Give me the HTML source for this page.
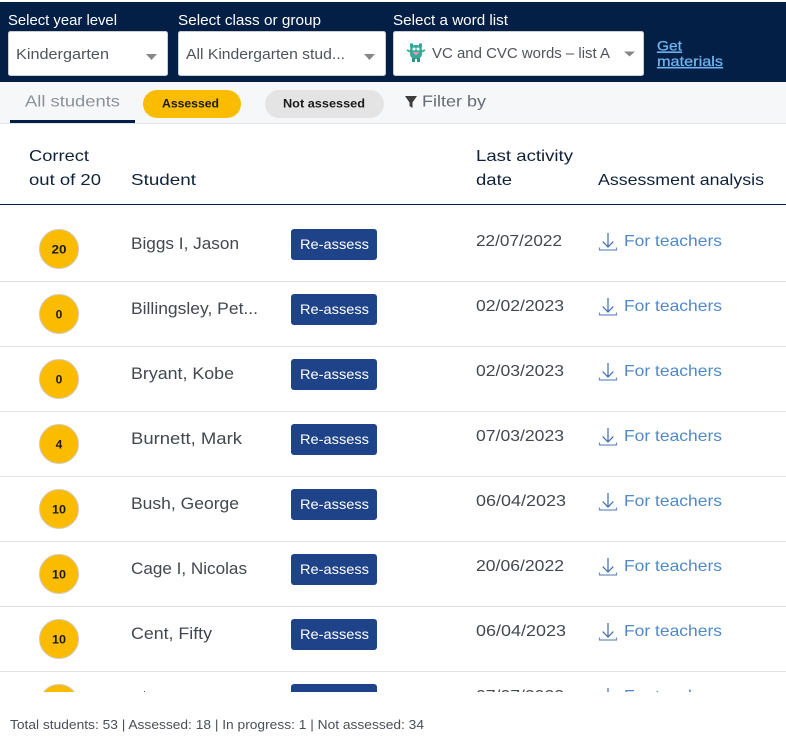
<!DOCTYPE html>
<html lang="en"><head><meta charset="utf-8"><title>Students</title>
<style>
html,body{margin:0;padding:0;background:#fff;width:786px;height:746px;overflow:hidden}
svg{display:block}
text{font-family:"Liberation Sans",sans-serif;white-space:pre}
.lab{font-size:14.5px;fill:#fff}
.sel{font-size:14.5px;fill:#4f545c}
.h{font-size:16px;fill:#0f2238}
.n{font-size:16.5px;fill:#43484f}
.d{font-size:16px;fill:#43484f}
.t{font-size:16px;fill:#5089c6}
.b{font-size:14px;fill:#fff}
.c{font-size:12px;font-weight:bold;fill:#1a1a1a}
.pill{font-size:12px;font-weight:bold;fill:#1a1a1a}
.g{font-size:14px;fill:#6fb5ee;stroke:#6fb5ee;stroke-width:.25px;text-decoration:underline}
</style></head><body>
<svg width="786" height="746" viewBox="0 0 786 746" xmlns="http://www.w3.org/2000/svg">
<defs>
<clipPath id="clip"><rect x="0" y="124" width="786" height="568"/></clipPath>
<g id="dl" fill="none" stroke="#3f6cae" stroke-width="1.2">
<path d="M9 0V13.5"/><path d="M3.7 8.6L9 14L14.300 8.600"/><path d="M.5 14.500V17H17.500V14.500" stroke="#6f8fc0"/>
</g>
</defs>
<rect width="786" height="746" fill="#fff"/>
<rect y="2" width="786" height="80" fill="#031f45"/>
<rect y="82" width="786" height="41" fill="#f5f7f9"/>
<rect y="123" width="786" height="1" fill="#e3e4e6"/>

<text class="lab" x="8" y="25" textLength="109" lengthAdjust="spacingAndGlyphs">Select year level</text>
<text class="lab" x="178" y="25" textLength="143" lengthAdjust="spacingAndGlyphs">Select class or group</text>
<text class="lab" x="393" y="25" textLength="115" lengthAdjust="spacingAndGlyphs">Select a word list</text>

<rect x="8.500" y="31.500" width="159" height="44" rx="2" fill="#fff" stroke="#c9ccd1"/>
<text class="sel" x="16" y="59" textLength="93" lengthAdjust="spacingAndGlyphs">Kindergarten</text>
<path d="M146 54H157L151.500 60Z" fill="#85878b"/>

<rect x="178.500" y="31.500" width="207" height="44" rx="2" fill="#fff" stroke="#c9ccd1"/>
<text class="sel" x="186" y="59" textLength="159" lengthAdjust="spacingAndGlyphs">All Kindergarten stud...</text>
<path d="M364 54H375L369.500 60Z" fill="#85878b"/>

<rect x="393.500" y="31.500" width="250" height="44" rx="2" fill="#fff" stroke="#c9ccd1"/>
<g>
<path d="M407 50L411 52M425 50L421 52" stroke="#2ea58f" stroke-width="1.800"/>
<rect x="410" y="45" width="12" height="14" rx="5" fill="#35ab9a"/>
<rect x="410" y="43.500" width="3" height="4" fill="#2fa897"/><rect x="419" y="43.500" width="3" height="4" fill="#2fa897"/>
<rect x="412" y="58" width="3" height="4" fill="#2b9484"/><rect x="417" y="58" width="3" height="4" fill="#2b9484"/>
<circle cx="414" cy="49" r="1.500" fill="#fff"/><circle cx="418" cy="49" r="1.500" fill="#fff"/>
<path d="M412.500 52H419.500L416 55.500Z" fill="#ea9ab2"/>
</g>
<text class="sel" x="432" y="58" textLength="178" lengthAdjust="spacingAndGlyphs">VC and CVC words – list A</text>
<path d="M624 51.500H635L629.500 56.500Z" fill="#85878b"/>

<text class="g" x="657" y="50.500" textLength="25" lengthAdjust="spacingAndGlyphs">Get</text>
<text class="g" x="657" y="66" textLength="66" lengthAdjust="spacingAndGlyphs">materials</text>

<text x="25" y="106.500" font-size="16" fill="#8d9199" textLength="95" lengthAdjust="spacingAndGlyphs">All students</text>
<rect x="10" y="120" width="125" height="3" fill="#031f45"/>
<rect x="143" y="90" width="98" height="28" rx="14" fill="#fbbc00"/>
<text class="pill" x="162" y="107.500" textLength="57" lengthAdjust="spacingAndGlyphs">Assessed</text>
<rect x="265" y="90" width="119" height="28" rx="14" fill="#e4e4e4"/>
<text class="pill" x="283" y="107.500" textLength="82" lengthAdjust="spacingAndGlyphs">Not assessed</text>
<path d="M405 96H417L412.500 102.500V108L409.500 106V102.500Z" fill="#3d3d3d"/>
<text x="422" y="106.500" font-size="16" fill="#666c75" textLength="64" lengthAdjust="spacingAndGlyphs">Filter by</text>

<text class="h" x="29" y="161" textLength="60" lengthAdjust="spacingAndGlyphs">Correct</text>
<text class="h" x="29" y="185" textLength="72" lengthAdjust="spacingAndGlyphs">out of 20</text>
<text class="h" x="131" y="185" textLength="65" lengthAdjust="spacingAndGlyphs">Student</text>
<text class="h" x="476" y="161" textLength="97" lengthAdjust="spacingAndGlyphs">Last activity</text>
<text class="h" x="476" y="185" textLength="36" lengthAdjust="spacingAndGlyphs">date</text>
<text class="h" x="598" y="185" textLength="166" lengthAdjust="spacingAndGlyphs">Assessment analysis</text>
<rect y="204" width="786" height="1" fill="#031f45"/>

<g fill="#e2e2e2">
<rect y="281" width="786" height="1"/><rect y="346" width="786" height="1"/><rect y="411" width="786" height="1"/><rect y="476" width="786" height="1"/><rect y="541" width="786" height="1"/><rect y="606" width="786" height="1"/><rect y="671" width="786" height="1"/>
</g>

<g clip-path="url(#clip)">
<g>
<circle cx="59" cy="249" r="19.500" fill="#fbbc00" stroke="#cfc9b5"/>
<text class="c" x="59" y="253.500" text-anchor="middle" textLength="15" lengthAdjust="spacingAndGlyphs">20</text>
<text class="n" x="131" y="249" textLength="108" lengthAdjust="spacingAndGlyphs">Biggs I, Jason</text>
<rect x="291" y="229" width="86" height="31" rx="3" fill="#1f4389"/>
<text class="b" x="300" y="249" textLength="69" lengthAdjust="spacingAndGlyphs">Re-assess</text>
<text class="d" x="476" y="246" textLength="86" lengthAdjust="spacingAndGlyphs">22/07/2022</text>
<use href="#dl" x="599" y="233"/>
<text class="t" x="624" y="246" textLength="98" lengthAdjust="spacingAndGlyphs">For teachers</text>
</g>
<g transform="translate(0,65)">
<circle cx="59" cy="249" r="19.500" fill="#fbbc00" stroke="#cfc9b5"/>
<text class="c" x="59" y="253.500" text-anchor="middle">0</text>
<text class="n" x="131" y="249" textLength="127" lengthAdjust="spacingAndGlyphs">Billingsley, Pet...</text>
<rect x="291" y="229" width="86" height="31" rx="3" fill="#1f4389"/>
<text class="b" x="300" y="249" textLength="69" lengthAdjust="spacingAndGlyphs">Re-assess</text>
<text class="d" x="476" y="246" textLength="88" lengthAdjust="spacingAndGlyphs">02/02/2023</text>
<use href="#dl" x="599" y="233"/>
<text class="t" x="624" y="246" textLength="98" lengthAdjust="spacingAndGlyphs">For teachers</text>
</g>
<g transform="translate(0,130)">
<circle cx="59" cy="249" r="19.500" fill="#fbbc00" stroke="#cfc9b5"/>
<text class="c" x="59" y="253.500" text-anchor="middle">0</text>
<text class="n" x="131" y="249" textLength="103" lengthAdjust="spacingAndGlyphs">Bryant, Kobe</text>
<rect x="291" y="229" width="86" height="31" rx="3" fill="#1f4389"/>
<text class="b" x="300" y="249" textLength="69" lengthAdjust="spacingAndGlyphs">Re-assess</text>
<text class="d" x="476" y="246" textLength="88" lengthAdjust="spacingAndGlyphs">02/03/2023</text>
<use href="#dl" x="599" y="233"/>
<text class="t" x="624" y="246" textLength="98" lengthAdjust="spacingAndGlyphs">For teachers</text>
</g>
<g transform="translate(0,195)">
<circle cx="59" cy="249" r="19.500" fill="#fbbc00" stroke="#cfc9b5"/>
<text class="c" x="59" y="253.500" text-anchor="middle">4</text>
<text class="n" x="131" y="249" textLength="111" lengthAdjust="spacingAndGlyphs">Burnett, Mark</text>
<rect x="291" y="229" width="86" height="31" rx="3" fill="#1f4389"/>
<text class="b" x="300" y="249" textLength="69" lengthAdjust="spacingAndGlyphs">Re-assess</text>
<text class="d" x="476" y="246" textLength="88" lengthAdjust="spacingAndGlyphs">07/03/2023</text>
<use href="#dl" x="599" y="233"/>
<text class="t" x="624" y="246" textLength="98" lengthAdjust="spacingAndGlyphs">For teachers</text>
</g>
<g transform="translate(0,260)">
<circle cx="59" cy="249" r="19.500" fill="#fbbc00" stroke="#cfc9b5"/>
<text class="c" x="59" y="253.500" text-anchor="middle" textLength="14" lengthAdjust="spacingAndGlyphs">10</text>
<text class="n" x="131" y="249" textLength="108" lengthAdjust="spacingAndGlyphs">Bush, George</text>
<rect x="291" y="229" width="86" height="31" rx="3" fill="#1f4389"/>
<text class="b" x="300" y="249" textLength="69" lengthAdjust="spacingAndGlyphs">Re-assess</text>
<text class="d" x="476" y="246" textLength="90" lengthAdjust="spacingAndGlyphs">06/04/2023</text>
<use href="#dl" x="599" y="233"/>
<text class="t" x="624" y="246" textLength="98" lengthAdjust="spacingAndGlyphs">For teachers</text>
</g>
<g transform="translate(0,325)">
<circle cx="59" cy="249" r="19.500" fill="#fbbc00" stroke="#cfc9b5"/>
<text class="c" x="59" y="253.500" text-anchor="middle" textLength="14" lengthAdjust="spacingAndGlyphs">10</text>
<text class="n" x="131" y="249" textLength="116" lengthAdjust="spacingAndGlyphs">Cage I, Nicolas</text>
<rect x="291" y="229" width="86" height="31" rx="3" fill="#1f4389"/>
<text class="b" x="300" y="249" textLength="69" lengthAdjust="spacingAndGlyphs">Re-assess</text>
<text class="d" x="476" y="246" textLength="88" lengthAdjust="spacingAndGlyphs">20/06/2022</text>
<use href="#dl" x="599" y="233"/>
<text class="t" x="624" y="246" textLength="98" lengthAdjust="spacingAndGlyphs">For teachers</text>
</g>
<g transform="translate(0,390)">
<circle cx="59" cy="249" r="19.500" fill="#fbbc00" stroke="#cfc9b5"/>
<text class="c" x="59" y="253.500" text-anchor="middle" textLength="14" lengthAdjust="spacingAndGlyphs">10</text>
<text class="n" x="131" y="249" textLength="81" lengthAdjust="spacingAndGlyphs">Cent, Fifty</text>
<rect x="291" y="229" width="86" height="31" rx="3" fill="#1f4389"/>
<text class="b" x="300" y="249" textLength="69" lengthAdjust="spacingAndGlyphs">Re-assess</text>
<text class="d" x="476" y="246" textLength="90" lengthAdjust="spacingAndGlyphs">06/04/2023</text>
<use href="#dl" x="599" y="233"/>
<text class="t" x="624" y="246" textLength="98" lengthAdjust="spacingAndGlyphs">For teachers</text>
</g>
<g transform="translate(0,455)">
<circle cx="59" cy="249" r="19.500" fill="#fbbc00" stroke="#cfc9b5"/>
<rect x="291" y="229" width="86" height="31" rx="3" fill="#1f4389"/>
<text class="d" x="476" y="246" textLength="88" lengthAdjust="spacingAndGlyphs">07/07/2022</text>
<use href="#dl" x="599" y="233"/>
<text class="t" x="624" y="246" textLength="98" lengthAdjust="spacingAndGlyphs">For teachers</text>
</g>
<rect x="144" y="691" width="1" height="1" fill="#43484f"/>
</g>

<text x="10" y="729" font-size="13" fill="#4a4f57" textLength="414" lengthAdjust="spacingAndGlyphs">Total students: 53 | Assessed: 18 | In progress: 1 | Not assessed: 34</text>
</svg>
</body></html>
